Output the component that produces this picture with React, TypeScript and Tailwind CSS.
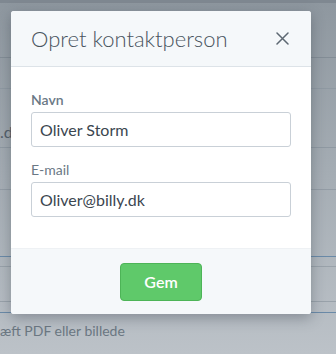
import React from "react";

const font = { fontFamily: '"Lato", "Open Sans", "Liberation Sans", sans-serif' };

const Field = ({ label, value, bold }: { label: string; value: string; bold?: boolean }) => (
  <div className="flex flex-col">
    <label className={`text-[14px] leading-[18px] text-[#6a7885] ${bold ? "font-semibold" : "font-normal"}`}>{label}</label>
    <div className="mt-[3px] flex h-[35px] items-center rounded-[3px] border border-[#c9d0d7] bg-white px-[8px] text-[16px] text-[#3b4650]">
      {value}
    </div>
  </div>
);

export default function App() {
  return (
    <div className="relative h-[354px] w-full overflow-hidden bg-gradient-to-b from-[#8e979f] via-[#a5adb4] to-[#bcc2c8]" style={font}>
      {/* page behind the overlay */}
      <div className="flex flex-col">
        <div className="h-[3px] bg-[#7f8891]" />
        <div className="h-[54px]" />
        <div className="h-px bg-[#838d96]" />
        <div className="h-[30px]" />
        <div className="h-px bg-[#8f99a2]" />
        <div className="h-[58px] pt-[34px] text-[16px] leading-[18px] text-[#55606a]">
          <span>.d</span>
        </div>
        <div className="h-px bg-[#8f99a2]" />
        <div className="h-[41px]" />
        <div className="h-px bg-[#939ca5]" />
        <div className="h-[66px]" />
        <div className="h-px bg-[#6a8aa8]" />
        <div className="h-[9px]" />
        <div className="h-px bg-[#99a2aa]" />
        <div className="h-[34px]" />
        <div className="h-px bg-[#99a2aa]" />
        <div className="h-[10px]" />
        <div className="h-px bg-[#6a8aa8]" />
        <div className="mt-[9px] text-[14px] leading-[18px] text-[#6b7782]">
          <span>æft PDF eller billede</span>
        </div>
      </div>

      {/* modal */}
      <div className="absolute left-[11px] top-[11px] w-[300px] overflow-hidden rounded-[3px] bg-white shadow-[0_4px_14px_rgba(40,50,60,0.35)]">
        <div className="flex h-[56px] items-center justify-between border-b border-[#dde3e8] bg-[#f5f8fa] pl-[20px] pr-[22px]">
          <h1 className="text-[22px] font-light text-[#49545e]">Opret kontaktperson</h1>
          <svg width="13" height="13" viewBox="0 0 13 13" className="text-[#5d6872]">
            <path d="M1 1 L12 12 M12 1 L1 12" stroke="currentColor" strokeWidth="1.5" strokeLinecap="round" />
          </svg>
        </div>
        <div className="flex flex-col gap-[14px] px-[20px] pb-[31px] pt-[24px]">
          <Field label="Navn" value="Oliver Storm" bold />
          <Field label="E-mail" value="Oliver@billy.dk" />
        </div>
        <div className="flex h-[66px] items-center justify-center border-t border-[#eef1f4] bg-[#f5f8fa]">
          <button className="h-[38px] w-[82px] rounded-[4px] border border-[#4db457] bg-[#5fc96a] text-[16px] font-semibold text-white">
            Gem
          </button>
        </div>
      </div>
    </div>
  );
}
